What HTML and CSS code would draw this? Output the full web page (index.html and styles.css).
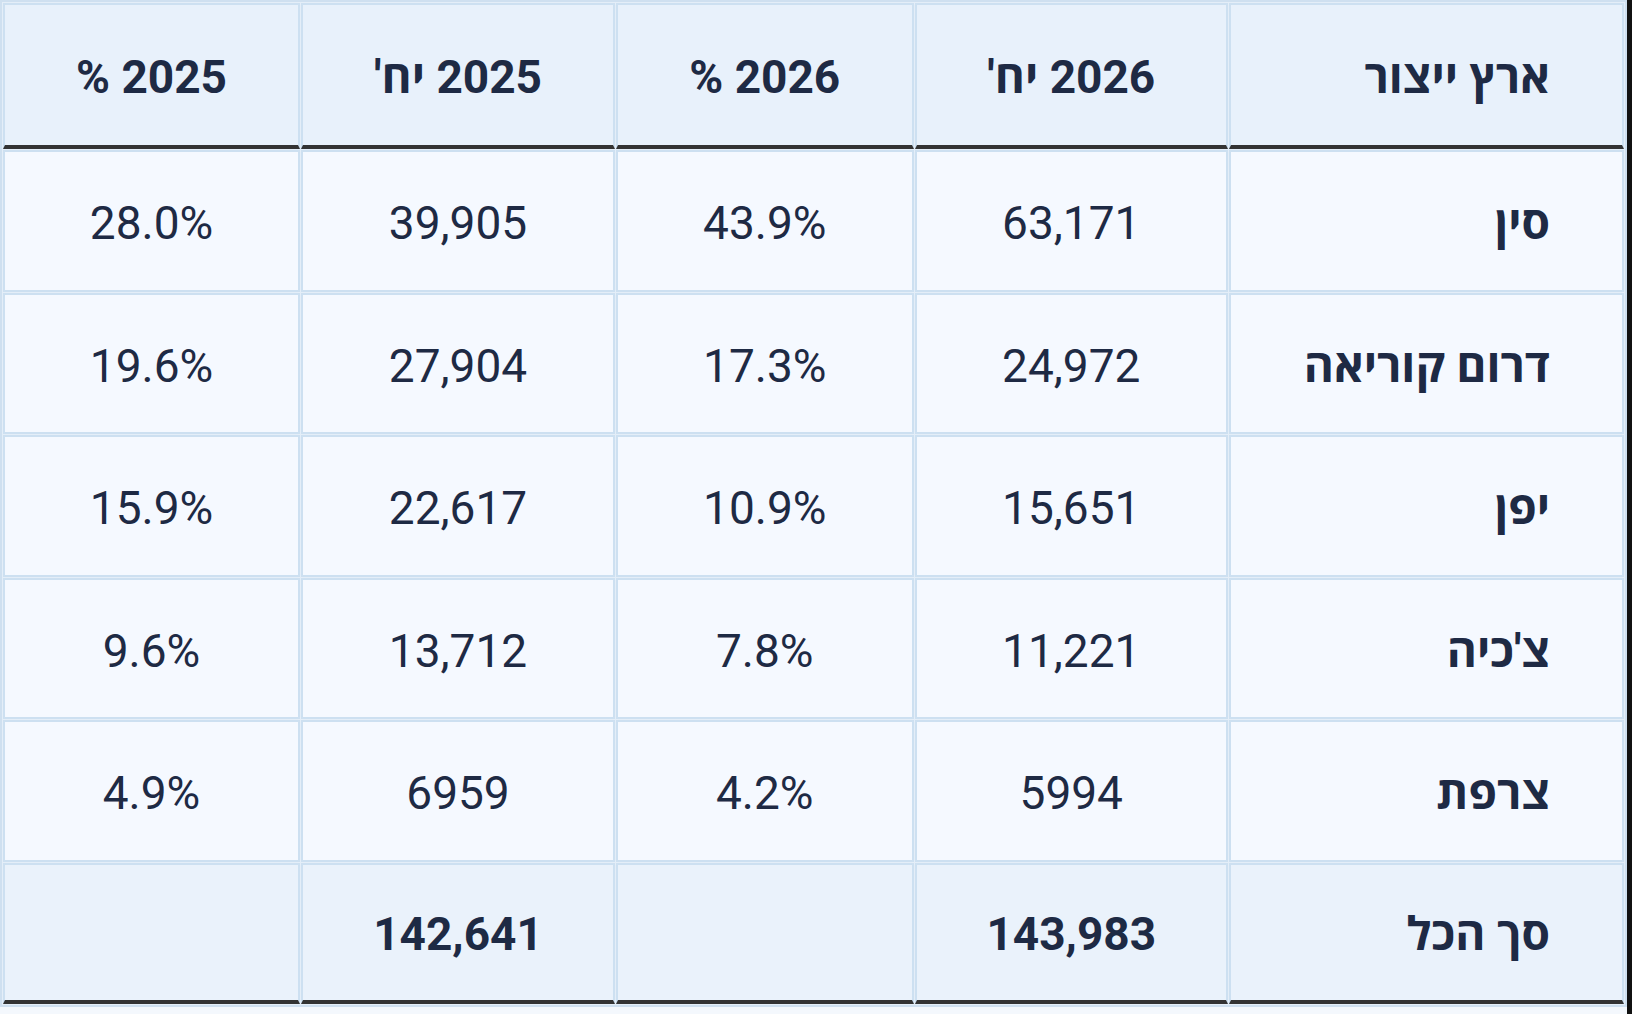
FILE: index.html
```html
<!DOCTYPE html>
<html lang="he">
<head>
<meta charset="utf-8">
<title>ארץ ייצור</title>
<link rel="stylesheet" href="styles.css">
</head>
<body>
<div class="wrap">
<table class="data">
  <thead>
    <tr>
      <th class="c-country">ארץ ייצור</th>
      <th class="c-u26">2026 יח'</th>
      <th class="c-p26">2026 %</th>
      <th class="c-u25">2025 יח'</th>
      <th class="c-p25">2025 %</th>
    </tr>
  </thead>
  <tbody>
    <tr><td class="label">סין</td><td>63,171</td><td>43.9%</td><td>39,905</td><td>28.0%</td></tr>
    <tr><td class="label">דרום קוריאה</td><td>24,972</td><td>17.3%</td><td>27,904</td><td>19.6%</td></tr>
    <tr><td class="label">יפן</td><td>15,651</td><td>10.9%</td><td>22,617</td><td>15.9%</td></tr>
    <tr><td class="label">צ'כיה</td><td>11,221</td><td>7.8%</td><td>13,712</td><td>9.6%</td></tr>
    <tr><td class="label">צרפת</td><td>5994</td><td>4.2%</td><td>6959</td><td>4.9%</td></tr>
  </tbody>
  <tfoot>
    <tr><td class="label">סך הכל</td><td>143,983</td><td></td><td>142,641</td><td></td></tr>
  </tfoot>
</table>
</div>
</body>
</html>
```

FILE: styles.css
```css
html {
  background: #111;
}
body {
  margin: 0;
  font-family: Roboto, "Open Sans", sans-serif;
  color: #1e2a44;
}
.wrap {
  width: 1627px;
  height: 1014px;
  background: #f4f8fd;
}
.data {
  width: 1627px;
  table-layout: fixed;
  border-collapse: separate;
  border-spacing: 1px;
  border: 2px solid #cfe0f0;
  background: #e4eef8;
  direction: rtl;
}
.data th,
.data td {
  box-sizing: border-box;
  border: 2px solid #cde0f1;
  padding: 6px 10px 0;
  height: 141.5px;
  text-align: center;
  vertical-align: middle;
  font-size: 46px;
  line-height: 1.2;
}
.data th {
  background: #e8f1fb;
  font-weight: 700;
  border-bottom: 4px solid #333;
  height: 146px;
}
.data tbody td {
  background: #f5f9ff;
  font-weight: 400;
}
.data tfoot td {
  background: #eaf2fb;
  font-weight: 700;
  border-bottom: 4px solid #333;
  height: 141px;
}
.data .label,
.data .c-country {
  text-align: right;
  padding-right: 72px;
  font-weight: 700;
}
.c-country { width: 395px; }
.c-u26 { width: 313.5px; }
.c-p26 { width: 297.5px; }
.c-u25 { width: 314px; }
.c-p25 { width: 297px; }
```
